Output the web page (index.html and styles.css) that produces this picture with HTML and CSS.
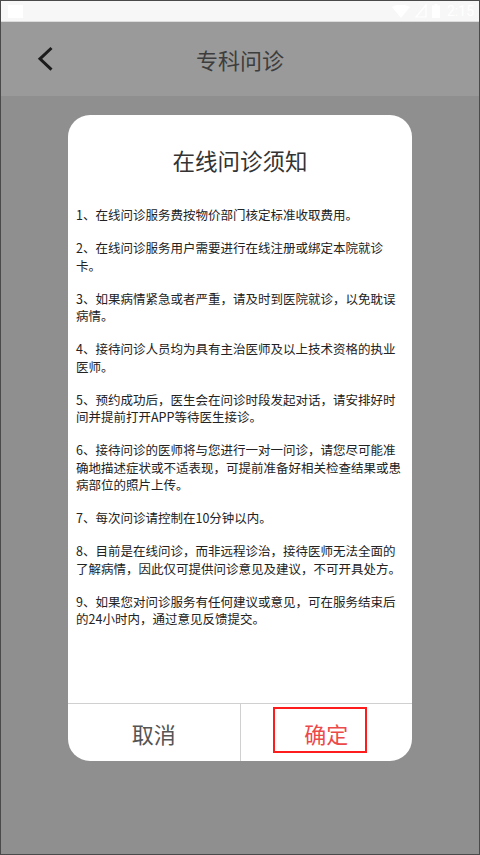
FILE: index.html
```html
<!DOCTYPE html>
<html lang="zh-CN">
<head>
    <meta charset="UTF-8">
    <meta name="viewport" content="width=device-width, initial-scale=1.0">
    <title>专科问诊</title>
    <link rel="stylesheet" href="styles.css">
</head>
<body>
    <div class="screen">
        <div class="status">
            <div class="status-sq"></div>
            <div class="status-icons">
                <svg width="18" height="13" viewBox="0 0 18 13"><path d="M0 2 Q9 -3 18 2 L9 13 Z" fill="#fff"/></svg>
                <svg width="12" height="14" viewBox="0 0 12 14"><path d="M1 13 L11 1 L11 13 Z" fill="none" stroke="#fff" stroke-width="1.2"/></svg>
                <svg width="8" height="14" viewBox="0 0 8 14"><rect x="0" y="1.5" width="8" height="12.5" fill="#fff"/><rect x="2.5" y="0" width="3" height="2" fill="#fff"/></svg>
                <span class="status-time">2:15</span>
            </div>
        </div>
        <div class="topbar">
            <svg class="back" width="18" height="26" viewBox="0 0 18 26">
                <path d="M14.5 2 L3 12.8 L14.5 23.6" fill="none" stroke="#1c1c1c" stroke-width="3"/>
            </svg>
            <div class="topbar-title">专科问诊</div>
            <div></div>
        </div>
        <div class="page">
            <div class="dialog">
                <h2 class="dialog-title">在线问诊须知</h2>
                <div class="notice">
                    <p>1、在线问诊服务费按物价部门核定标准收取费用。</p>
                    <p>2、在线问诊服务用户需要进行在线注册或绑定本院就诊卡。</p>
                    <p>3、如果病情紧急或者严重，请及时到医院就诊，以免耽误病情。</p>
                    <p>4、接待问诊人员均为具有主治医师及以上技术资格的执业医师。</p>
                    <p>5、预约成功后，医生会在问诊时段发起对话，请安排好时间并提前打开APP等待医生接诊。</p>
                    <p>6、接待问诊的医师将与您进行一对一问诊，请您尽可能准确地描述症状或不适表现，可提前准备好相关检查结果或患病部位的照片上传。</p>
                    <p>7、每次问诊请控制在10分钟以内。</p>
                    <p>8、目前是在线问诊，而非远程诊治，接待医师无法全面的了解病情，因此仅可提供问诊意见及建议，不可开具处方。</p>
                    <p>9、如果您对问诊服务有任何建议或意见，可在服务结束后的24小时内，通过意见反馈提交。</p>
                </div>
                <div class="actions">
                    <div class="btn btn-cancel">取消</div>
                    <div class="btn btn-ok">确定<i class="mark"></i></div>
                </div>
            </div>
        </div>
    </div>
</body>
</html>
```

FILE: styles.css
```css
body {
    margin: 0;
    font-family: "Noto Sans CJK SC", "Noto Sans", sans-serif;
}
.screen {
    width: 480px;
    height: 855px;
    box-sizing: border-box;
    border: 1px solid #4a4a4a;
    background-color: #8f8f8f;
    display: flex;
    flex-direction: column;
}
.status {
    height: 20px;
    background-color: #f7f7f7;
    border-bottom: 1px solid #dcdcdc;
    display: flex;
    align-items: center;
    justify-content: space-between;
    padding: 0 5px 0 7px;
}
.status-sq {
    width: 15px;
    height: 13px;
    background-color: #fff;
}
.status-icons {
    display: flex;
    align-items: center;
    gap: 5px;
}
.status-time {
    color: #fff;
    font-family: Roboto, sans-serif;
    font-size: 14px;
    margin-left: 2px;
}
.topbar {
    height: 74px;
    background-color: #9a9a9a;
    display: grid;
    grid-template-columns: 1fr auto 1fr;
    align-items: center;
    padding-left: 36px;
    padding-right: 36px;
}
.topbar-title {
    font-size: 22px;
    color: #3d3d3d;
}
.page {
    flex: 1;
    padding-top: 19px;
}
.dialog {
    width: 344px;
    height: 646px;
    margin: 0 auto;
    background-color: #fff;
    border-radius: 22px;
    display: flex;
    flex-direction: column;
}
.dialog-title {
    margin: 30px 0 0;
    font-size: 22.5px;
    line-height: 30px;
    font-weight: normal;
    text-align: center;
    color: #333;
}
.notice {
    flex: 1;
    padding: 31px 8px 0;
}
.notice p {
    margin: 0 0 15.5px;
    font-size: 12.5px;
    line-height: 17.5px;
    color: #222;
}
.actions {
    height: 57px;
    border-top: 1px solid #d0d0d0;
    display: flex;
}
.btn {
    flex: 1;
    display: flex;
    align-items: center;
    justify-content: center;
    font-size: 22px;
}
.btn-cancel {
    color: #555;
    border-right: 1px solid #d0d0d0;
}
.btn-ok {
    color: #ec4a4a;
    position: relative;
}
.mark {
    position: absolute;
    left: 32px;
    top: 3px;
    width: 94px;
    height: 46px;
    box-sizing: border-box;
    border: 2px solid #ff1c1c;
}
```
